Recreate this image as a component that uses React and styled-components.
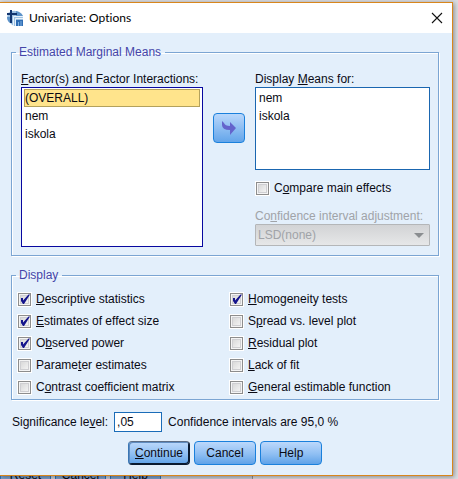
import React, { useState } from 'react'
import styled, { createGlobalStyle } from 'styled-components'

const GlobalStyle = createGlobalStyle`
  * {
    box-sizing: border-box;
  }
  body {
    margin: 0;
    font: 12px/14px 'Liberation Sans', Arial, sans-serif;
    color: #0a0a14;
  }
  button, input, select {
    font: inherit;
    color: inherit;
  }
`

const Page = styled.div`
  display: flex;
  flex-direction: column;
  height: 100vh;
  padding: 2px 5px 0 0;
  overflow: hidden;
  background: #dcdde0;
`

const Dialog = styled.main`
  flex: none;
  background: #e3effb;
  border: 1px solid #d8861c;
  border-left: 0;
  box-shadow: 1px 1px 5px rgba(0, 0, 0, 0.4);
  z-index: 1;
`

const TitleBar = styled.header`
  display: flex;
  align-items: center;
  gap: 5px;
  height: 30px;
  padding: 0 9px 0 7px;
  background: #fff;
`

const Title = styled.h1`
  flex: 1;
  margin: 0;
  font: 12px/16px Lato, 'Open Sans', sans-serif;
  font-variant-ligatures: none;
  color: #000;
`

const CloseButton = styled.button`
  display: flex;
  padding: 0;
  border: 0;
  background: none;
`

const Content = styled.div`
  padding: 12px 13px 10px 11px;
`

const Group = styled.fieldset`
  min-width: 0;
  margin: 0 0 12px;
  padding: 0;
  border: 1px solid #7ba5d3;
  box-shadow: 1px 1px #fff, inset 1px 1px #fff;
`

const Legend = styled.legend`
  margin-left: 4px;
  padding: 0 4px 0 3px;
  color: #4545a8;
`

const MeansGrid = styled.div`
  display: grid;
  grid-template-columns: 182fr 32px 175fr;
  column-gap: 10px;
  padding: 13px 8px 8px 9px;
`

const Column = styled.div`
  display: flex;
  flex-direction: column;
  min-width: 0;
`

const FieldLabel = styled.label`
  margin-bottom: 1px;
  white-space: nowrap;
  color: ${p => (p.$disabled ? '#a0a3a8' : 'inherit')};
`

const ListBox = styled.select`
  appearance: none;
  width: 100%;
  height: ${p => p.$height};
  padding: 1px 2px;
  border: 1px solid ${p => p.$color};
  border-radius: 0;
  outline: 0;
  overflow: hidden;
  background: #fff;

  option {
    height: 18px;
    min-height: 18px;
    padding: 1px 0;
    border: 1px solid transparent;
    color: #0a0a14;
  }
  option:checked {
    border-color: #b3a15c;
    background: #ffe48c linear-gradient(#ffe48c, #ffe48c);
  }
`

const MoveButton = styled.button`
  display: flex;
  align-items: center;
  justify-content: center;
  width: 32px;
  height: 30px;
  margin-top: 41px;
  padding: 0;
  border: 1px solid #1a80dc;
  border-radius: 4px;
  background: linear-gradient(#b9d7fb, #63a5ea);
`

const CompareRow = styled.div`
  padding: 7px 0 10px 1px;
`

const CheckLabel = styled.label`
  display: flex;
  align-items: center;
  gap: 5px;
  height: 22px;
  white-space: nowrap;
`

const CheckInput = styled.input`
  appearance: none;
  width: 13px;
  height: 13px;
  margin: 0;
  border: 1px solid #8d8d8d;
  box-shadow: inset 0 0 0 1px #f4f4f4, inset 0 0 0 2px #cfcfd2, 0 0 0 1px #fff;
  background: linear-gradient(135deg, #d2d2d2, #fafafa);
`

const CheckBox = styled.span`
  display: grid;

  > * {
    grid-area: 1 / 1;
  }
  svg {
    z-index: 1;
    pointer-events: none;
  }
`

const Combo = styled.select`
  appearance: none;
  width: 100%;
  height: 22px;
  padding: 0 2px;
  border: 1px solid #b4b6b8;
  border-radius: 1px;
  opacity: 1;
  background: linear-gradient(#d2d3d5, #e6e7e8);
  color: #a0a3a8;
`

const ComboWrap = styled.div`
  display: grid;
  align-items: center;

  > * {
    grid-area: 1 / 1;
  }
  svg {
    z-index: 1;
    justify-self: end;
    margin-right: 6px;
    pointer-events: none;
  }
`

const Checks = styled.div`
  display: grid;
  grid-template-columns: 106fr 104fr;
  grid-template-rows: repeat(5, 22px);
  grid-auto-flow: column;
  padding: 6px 0 1px 6px;
`

const LevelRow = styled.div`
  display: flex;
  align-items: center;
  gap: 6px;
  padding-left: 1px;
`

const LevelInput = styled.input`
  width: 48px;
  height: 20px;
  padding: 0 2px;
  border: 1px solid #1a6cb8;
  background: #fff;
`

const Buttons = styled.div`
  display: flex;
  justify-content: center;
  gap: 4px;
  margin-top: 9px;
`

const Button = styled.button`
  width: 62px;
  height: 24px;
  padding: 0;
  border: 1px solid #1a80dc;
  border-radius: 4px;
  background: linear-gradient(#bcd8fb, #8fbff3 55%, #5fa2e8);
  ${p => p.$primary && `
    border-color: #5c6c84 #0a1a30 #0a1a30 #3a76b4;
    box-shadow: inset -1px -1px #0a1a30, inset 1px 1px #5f8cc0;
  `}
`

const Behind = styled.div`
  display: flex;
  align-items: flex-end;
  gap: 4px;
  flex: 1;
  min-height: 0;
  width: 253px;
  overflow: hidden;
  border-right: 1px solid #909296;
  background: #c8ced8;
`

const BehindButton = styled.button`
  flex: none;
  width: 51px;
  height: 24px;
  margin-bottom: -8px;
  padding: 0;
  border: 1px solid #2a72b8;
  border-radius: 4px;
  background: #7ba0cc;
`

const Key = ({ text }) => {
  const [before, key, after] = text.split('_')

  return <span>{before}<u>{key}</u>{after}</span>
}

const Check = ({ text, initial = false }) => {
  const [checked, setChecked] = useState(initial)

  return (
    <CheckLabel>
      <CheckBox>
        <CheckInput type="checkbox" checked={checked} onChange={() => setChecked(!checked)} />
        {checked && (
          <svg width="13" height="13" viewBox="0 0 13 13">
            <path d="M3 5H5V7.5L10.5 1.5H12L6 11H5L3 8Z" fill="#14148c" />
          </svg>
        )}
      </CheckBox>
      <Key text={text} />
    </CheckLabel>
  )
}

const Logo = () => (
  <svg width="17" height="17" viewBox="0 0 17 17">
    <path d="M1 3Q8-2 15 4L16 8V16H7Q2 13 0 8Z" fill="#9cc0e2" />
    <path d="M9 1Q14 2 16 6H9Z" fill="#5d92c8" />
    <path d="M0 7H3V13Q0 11 0 7Z" fill="#5d92c8" />
    <path d="M0 4H10M4 0V13" stroke="#12346e" strokeWidth="2" />
    <path d="M6.5 16V6.5H16M8.5 16V8.5H16" fill="none" stroke="#e8f2fb" strokeWidth="1" />
    <path d="M9 10H16V16H9Z" fill="#2f6db4" />
    <path d="M11.5 12V16M14 11V16" stroke="#7fb0e0" strokeWidth="1" />
  </svg>
)

export default () => {
  const [level, setLevel] = useState(',05')

  return (
    <Page>
      <GlobalStyle />
      <Dialog>
        <TitleBar>
          <Logo />
          <Title>Univariate: Options</Title>
          <CloseButton aria-label="Close">
            <svg width="12" height="12" viewBox="0 0 12 12">
              <path d="M1 1L11 11M11 1L1 11" stroke="#111" strokeWidth="1.1" />
            </svg>
          </CloseButton>
        </TitleBar>
        <Content>
          <Group>
            <Legend>Estimated Marginal Means</Legend>
            <MeansGrid>
              <Column>
                <FieldLabel htmlFor="factors"><Key text="_F_actor(s) and Factor Interactions:" /></FieldLabel>
                <ListBox id="factors" size="3" defaultValue="(OVERALL)" $height="160px" $color="#0808a0">
                  <option>(OVERALL)</option>
                  <option>nem</option>
                  <option>iskola</option>
                </ListBox>
              </Column>
              <MoveButton aria-label="Move">
                <svg width="14" height="14" viewBox="0 0 14 14">
                  <path d="M0 0L2 2Q3 5 8 5V1L14 7L8 14V9Q0 9 0 4Z" fill="#6464cc" />
                </svg>
              </MoveButton>
              <Column>
                <FieldLabel htmlFor="means"><Key text="Display _M_eans for:" /></FieldLabel>
                <ListBox id="means" size="3" $height="83px" $color="#1a66b0">
                  <option>nem</option>
                  <option>iskola</option>
                </ListBox>
                <CompareRow>
                  <Check text="C_o_mpare main effects" />
                </CompareRow>
                <FieldLabel htmlFor="adjustment" $disabled><Key text="Co_n_fidence interval adjustment:" /></FieldLabel>
                <ComboWrap>
                  <Combo id="adjustment" disabled>
                    <option>LSD(none)</option>
                  </Combo>
                  <svg width="10" height="5" viewBox="0 0 10 5">
                    <path d="M0 0H10L5 5Z" fill="#8a8d90" />
                  </svg>
                </ComboWrap>
              </Column>
            </MeansGrid>
          </Group>
          <Group>
            <Legend>Display</Legend>
            <Checks>
              <Check text="_D_escriptive statistics" initial />
              <Check text="_E_stimates of effect size" initial />
              <Check text="O_b_served power" initial />
              <Check text="Parame_t_er estimates" />
              <Check text="C_o_ntrast coefficient matrix" />
              <Check text="_H_omogeneity tests" initial />
              <Check text="S_p_read vs. level plot" />
              <Check text="_R_esidual plot" />
              <Check text="_L_ack of fit" />
              <Check text="_G_eneral estimable function" />
            </Checks>
          </Group>
          <LevelRow>
            <label htmlFor="level"><Key text="Significance le_v_el:" /></label>
            <LevelInput id="level" value={level} onChange={e => setLevel(e.target.value)} />
            <span>Confidence intervals are 95,0 %</span>
          </LevelRow>
          <Buttons>
            <Button $primary><Key text="_C_ontinue" /></Button>
            <Button>Cancel</Button>
            <Button>Help</Button>
          </Buttons>
        </Content>
      </Dialog>
      <Behind>
        <BehindButton>Reset</BehindButton>
        <BehindButton>Cancel</BehindButton>
        <BehindButton>Help</BehindButton>
      </Behind>
    </Page>
  )
}
